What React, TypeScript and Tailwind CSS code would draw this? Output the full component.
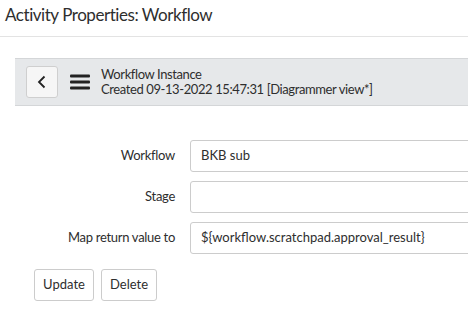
const fields = [
    { label: 'Workflow', value: 'BKB sub' },
    { label: 'Stage', value: '' },
    { label: 'Map return value to', value: '${workflow.scratchpad.approval_result}' },
];

const App = () => {
    return (
        <div
            className="w-[468px] h-[319px] overflow-hidden bg-white text-[#2e2e2e]"
            style={{ fontFamily: 'Lato, "Open Sans", sans-serif' }}
        >
            {/* Title */}
            <div className="h-[37px] pl-[5px] pt-[4px] border-b border-[#e3e3e3]">
                <h1 className="text-[17px] leading-[22px] tracking-[-0.45px]">Activity Properties: Workflow</h1>
            </div>

            {/* Record header */}
            <div className="ml-[15px] mt-[21px] h-[48px] flex items-center bg-[#e6e8ea] border-y border-[#d4d6d8]">
                <button className="ml-[11px] w-[32px] h-[32px] shrink-0 flex items-center justify-center bg-[#f6f6f6] border border-[#cfcfcf] rounded-[3px]">
                    <svg width="10" height="14" viewBox="0 0 10 14" fill="none">
                        <path d="M7.5 1.5 L2 7 L7.5 12.5" stroke="#222" strokeWidth="1.8" />
                    </svg>
                </button>
                <svg className="ml-[12px] shrink-0" width="20" height="16" viewBox="0 0 20 16">
                    <rect x="0" y="0.5" width="20" height="3" rx="1" fill="#222" />
                    <rect x="0" y="6.5" width="20" height="3" rx="1" fill="#222" />
                    <rect x="0" y="12.5" width="20" height="3" rx="1" fill="#222" />
                </svg>
                <div className="ml-[11px] flex flex-col text-[13px] leading-[15px] tracking-[-0.4px] whitespace-nowrap">
                    <span>Workflow Instance</span>
                    <span>Created 09-13-2022 15:47:31 [Diagrammer view*]</span>
                </div>
            </div>

            {/* Form */}
            <div className="mt-[34px] flex flex-col gap-[9px]">
                {fields.map((f) => (
                    <div key={f.label} className="flex items-center">
                        <label className="w-[175px] shrink-0 text-right text-[13px] tracking-[-0.3px]">{f.label}</label>
                        <div className="ml-[15px] w-[300px] h-[32px] shrink-0 flex items-center pl-[10px] border border-[#cccccc] rounded-[3px] text-[13px] whitespace-nowrap">
                            {f.value}
                        </div>
                    </div>
                ))}
            </div>

            {/* Actions */}
            <div className="mt-[15px] ml-[34px] flex gap-[7px]">
                <button className="w-[60px] h-[32px] bg-white border border-[#cccccc] rounded-[3px] text-[13px]">Update</button>
                <button className="w-[56px] h-[32px] bg-white border border-[#cccccc] rounded-[3px] text-[13px]">Delete</button>
            </div>
        </div>
    );
};

export default App;
